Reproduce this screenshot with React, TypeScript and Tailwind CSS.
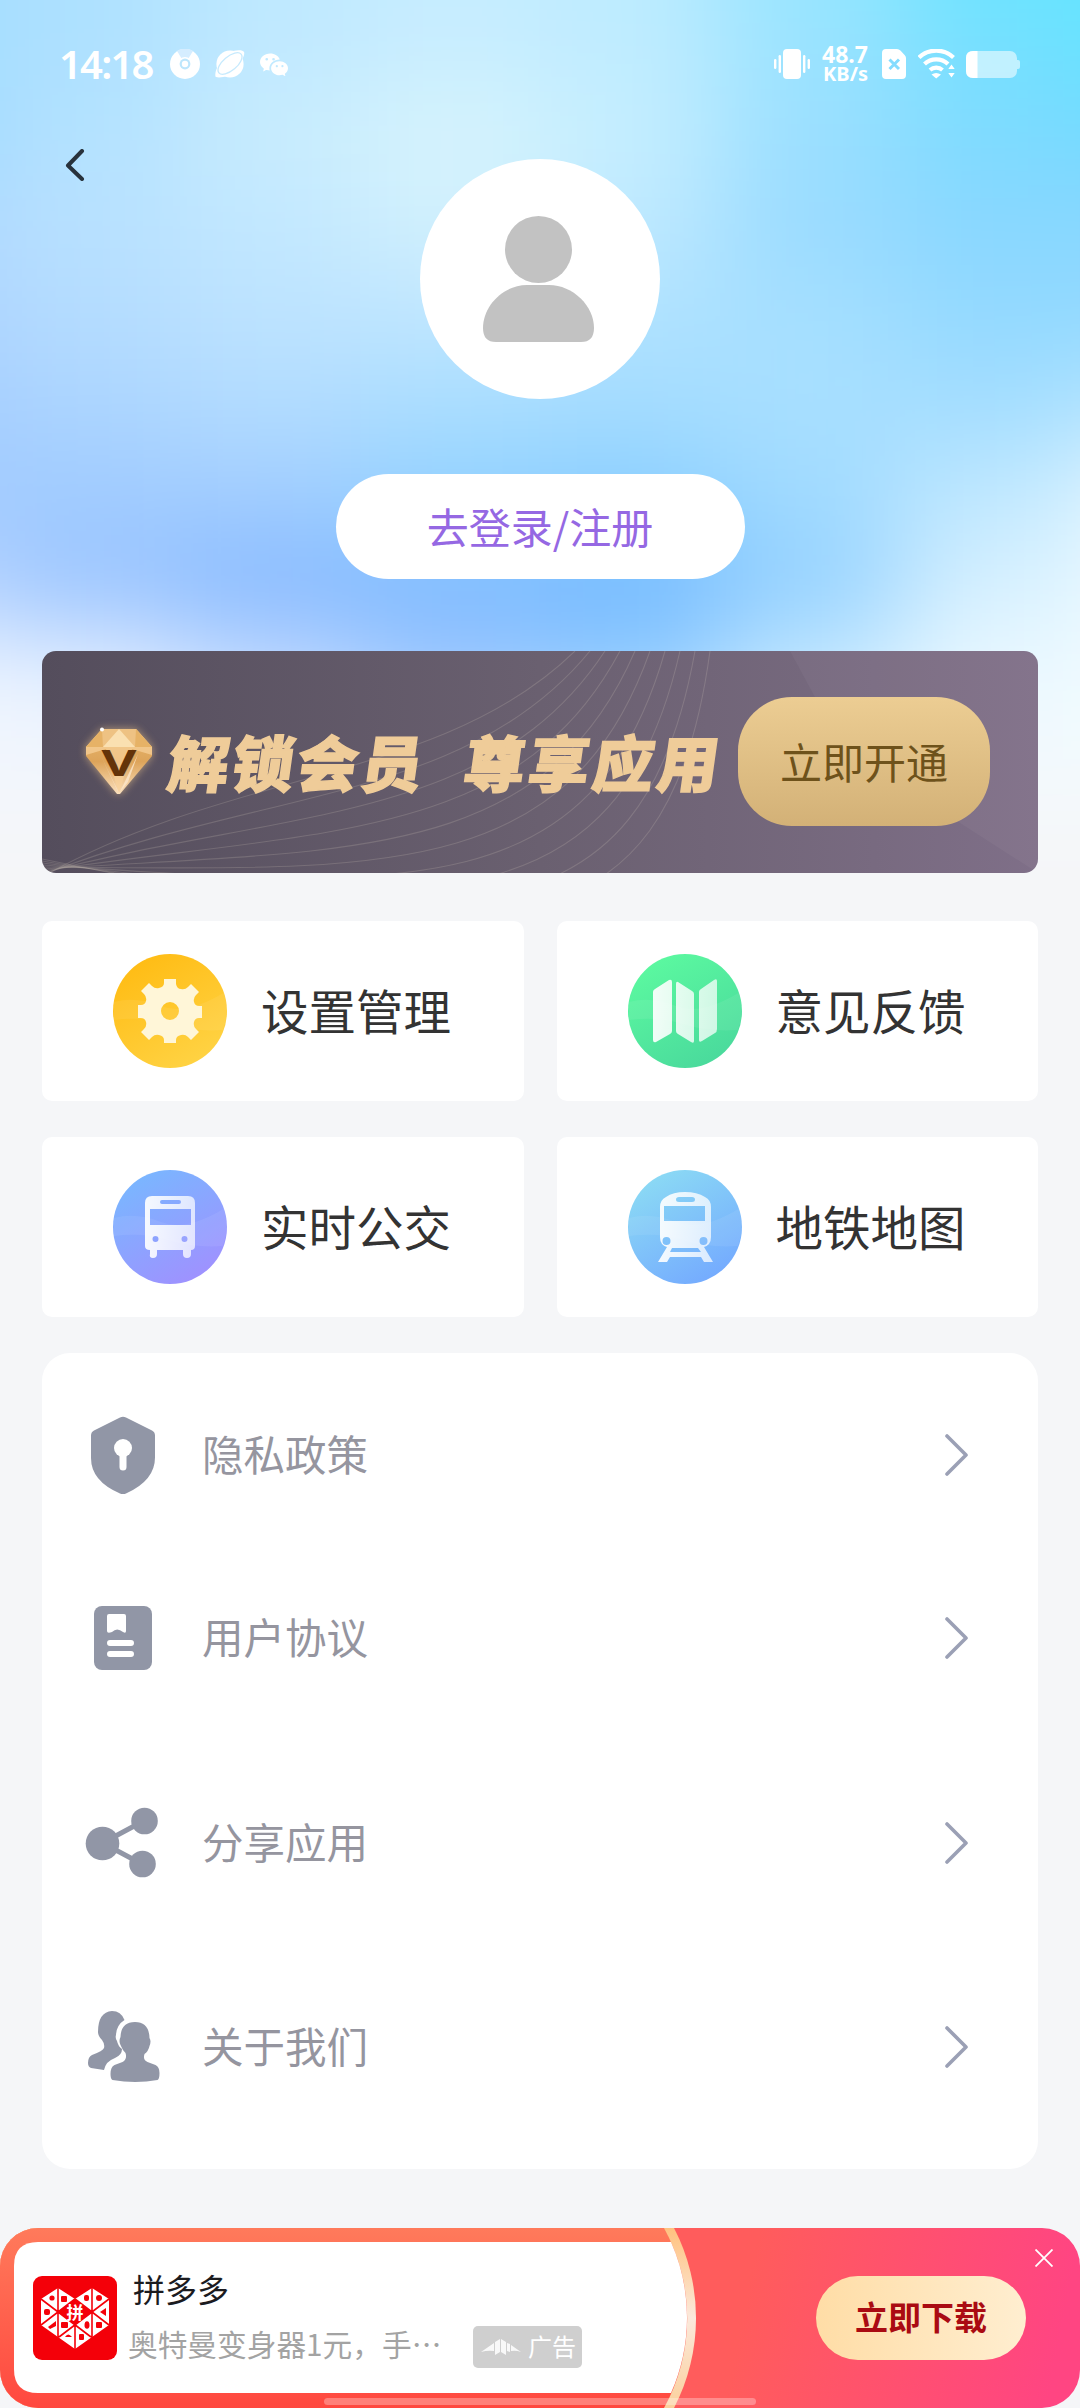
import type { ReactNode } from 'react';
import { BsWechat } from 'react-icons/bs';

// Colour samples for the soft sky behind the header, one row every 90px
const skyRows = [
  ['#a2dcff', '#aee1ff', '#bde8ff', '#c6ecff', '#bcebff', '#96e6ff', '#6be5ff', '#5ce6ff'],
  ['#a2dcff', '#aee1ff', '#c0e9ff', '#c8edff', '#bfecff', '#9be3ff', '#76e0ff', '#60e4ff'],
  ['#a0d9ff', '#b4e2ff', '#c8ecfe', '#d7f4fc', '#c5eeff', '#9bdfff', '#7edbff', '#70d8ff'],
  ['#aed6ff', '#b8e1ff', '#c2e8ff', '#d1f0fd', '#bfe9ff', '#9adbff', '#89d7ff', '#86d6ff'],
  ['#acd2ff', '#b4dcff', '#bde3ff', '#bfe6ff', '#b0e2ff', '#a5dfff', '#93d9ff', '#90d8ff'],
  ['#a4ccff', '#acd5ff', '#b2dcff', '#aaddff', '#a4dcff', '#a8dfff', '#a3ddff', '#b8e5ff'],
  ['#a2cbff', '#a0cbff', '#a2cdff', '#93d2ff', '#8dd0ff', '#a0daff', '#c0e8ff', '#eaf8ff'],
  ['#bcd6ff', '#9cc5ff', '#88baff', '#80baff', '#74b9ff', '#96d2ff', '#d6f0ff', '#f0fbff'],
  ['#eff6ff', '#e6f0ff', '#c2daff', '#9ac6ff', '#92cdff', '#c4e8ff', '#eaf8ff', '#f2fcff'],
  ['#f3f7fd', '#f2f6fd', '#f0f5fc', '#e8f2fc', '#e8f4fc', '#f0f8fd', '#f3fafd', '#f4fafd'],
  ['#f5f6f8', '#f5f6f8', '#f5f6f8', '#f5f6f8', '#f5f6f8', '#f5f6f8', '#f5f6f8', '#f5f6f8'],
  ['#f5f6f8', '#f5f6f8', '#f5f6f8', '#f5f6f8', '#f5f6f8', '#f5f6f8', '#f5f6f8', '#f5f6f8'],
];

function Sky() {
  return (
    <svg className="absolute left-0 top-0 h-[870px] w-[1080px]" viewBox="0 0 1080 870">
      <defs>
        <filter id="soft" filterUnits="userSpaceOnUse" x="-300" y="-200" width="1680" height="1300" colorInterpolationFilters="sRGB">
          <feGaussianBlur stdDeviation="56 46" />
        </filter>
      </defs>
      <g filter="url(#soft)">
        {skyRows.map((row, r) =>
          row.map((color, c) => (
            <rect
              key={`${r}-${c}`}
              x={c === 0 ? -300 : (c - 1) * 180}
              y={r === 0 ? -200 : (r - 1) * 90}
              width={c === 0 || c === 7 ? 301 : 181}
              height={r === 0 || r === 11 ? 201 : 91}
              fill={color}
            />
          ))
        )}
      </g>
    </svg>
  );
}

function StatusBar() {
  return (
    <div className="flex h-32 items-center justify-between pl-[59px] pr-[60px] text-white">
      <div className="flex items-center">
        <span className="w-24 whitespace-nowrap font-['Noto_Sans'] text-[40px] font-semibold leading-none tracking-[-1.8px]">14:18</span>
        <svg className="ml-[15px] size-[30px]" viewBox="0 0 30 30">
          <circle cx="15" cy="15" r="15" fill="white" />
          <path d="M15 15 7 2a15 15 0 0 1 16 0z" fill="#d5edff" />
          <circle cx="15" cy="15" r="7" fill="white" />
          <circle cx="15" cy="15" r="5.400" fill="#bde6fc" />
          <circle cx="15" cy="15" r="3.200" fill="white" />
        </svg>
        <svg className="ml-[15px] size-[30px]" viewBox="0 0 30 30">
          <circle cx="15" cy="15" r="13.600" fill="white" />
          <path d="M2 19C0 23 0 28 1 28c3 1 8 0 11-1M18 2c5-1 10-1 11 1s-1 6-3 10" fill="white" />
          <ellipse cx="15" cy="14.500" rx="14.500" ry="7" transform="rotate(-40 15 14.500)" fill="none" stroke="#c6eafd" strokeWidth="1.300" />
        </svg>
        <BsWechat className="ml-[15px] size-[28px]" />
      </div>
      <div className="flex items-center">
        <svg className="h-[30px] w-9" viewBox="0 0 36 30" fill="white">
          <rect x="9" width="18" height="30" rx="4" />
          <rect x="4.600" y="6" width="2.400" height="18" rx="1.200" />
          <rect x="29" y="6" width="2.400" height="18" rx="1.200" />
          <rect y="10" width="2.400" height="10" rx="1.200" />
          <rect x="33.600" y="10" width="2.400" height="10" rx="1.200" />
        </svg>
        <div className="ml-3 flex w-[46px] flex-col items-end font-['Noto_Sans'] font-bold leading-5">
          <span className="text-[23px]">48.7</span>
          <span className="text-[20px]">KB/s</span>
        </div>
        <svg className="ml-[14px] h-[30px] w-6" viewBox="0 0 24 30">
          <path d="M4 0h11q2 0 3.400 1.500l4.200 4.400Q24 7.300 24 9v17q0 4-4 4H4q-4 0-4-4V4q0-4 4-4z" fill="white" />
          <path d="m7.500 10.500 9.500 9.500m0-9.500-9.500 9.500" stroke="#85dcff" strokeWidth="3" />
        </svg>
        <svg className="ml-3 h-[30px] w-[37px]" viewBox="0 0 37 30" fill="none" stroke="white" strokeWidth="4.200">
          <path d="M1 8.500a25 25 0 0 1 34.500 0" />
          <path d="M6.500 15a17 17 0 0 1 23.500 0" />
          <path d="M12 21a9.500 9.500 0 0 1 12.500 0" />
          <path d="M18.200 29.500 13.500 25.500q4.500-3.200 9.500 0zM33.500 15.500l3.200 4.500h-6.400zM33.500 28.500l3.200-4.500h-6.400z" fill="white" stroke="none" />
        </svg>
        <svg className="ml-[11px] h-[27px] w-[54px]" viewBox="0 0 54 27" fill="white">
          <rect width="51" height="27" rx="7" opacity=".55" />
          <path d="M51 9h1q2 0 2 2v5q0 2-2 2h-1z" opacity=".55" />
          <path d="M11.500 0H7Q0 0 0 7v13q0 7 7 7h4.500z" />
        </svg>
      </div>
    </div>
  );
}

function Diamond() {
  return (
    <svg className="h-[86px] w-[88px]" viewBox="0 0 88 86">
      <defs>
        <linearGradient id="gem" x1="0" y1="0" x2="0" y2="1">
          <stop offset="0" stopColor="#e9b96f" />
          <stop offset=".5" stopColor="#dda45a" />
          <stop offset="1" stopColor="#fbe0bd" />
        </linearGradient>
        <filter id="gemGlow" x="-30%" y="-30%" width="160%" height="160%">
          <feGaussianBlur stdDeviation="4" />
        </filter>
      </defs>
      <path d="M27 10h34l16 18v9L45 75h-3L11 37v-9z" fill="#f4c98a" opacity=".6" filter="url(#gemGlow)" />
      <path d="M27 10h34l16 18v9L45 75h-3L11 37v-9z" fill="url(#gem)" />
      <path d="M11 28h66L61 10H27z" fill="#eec283" />
      <path d="M28 28 44 10l16 18z" fill="#fae0b1" />
      <path d="M27 10 11 28h17zM61 10l16 18H60z" fill="#e6b266" />
      <path d="M11 28h66v8L57 30 44 75 31 30 11 36z" fill="#f8d29b" opacity=".7" />
      <path d="M25 35 44 75l19-40-10 28-9 11z" fill="#fde7cc" opacity=".8" />
      <text x="44" y="57" textAnchor="middle" textLength="35" lengthAdjust="spacingAndGlyphs" className="font-['Noto_Sans']" fontSize="35" fontWeight="700" fill="#643409">V</text>
      <circle cx="27" cy="10.500" r="2" fill="white" />
    </svg>
  );
}

function VipBanner() {
  return (
    <div className="relative mx-[42px] mt-[72px] flex h-[222px] items-center overflow-hidden rounded-[14px] bg-gradient-to-r from-[#544d5c] via-[#6a6070] to-[#7f6f88]">
      <svg className="absolute inset-0 h-full w-full" viewBox="0 0 996 222" fill="none">
        <path d="M748 0h248v222L800 96z" fill="white" opacity=".04" />
        {[0, 1, 2, 3, 4, 5, 6, 7, 8, 9].map(i => (
          <path
            key={i}
            d={`M0 ${226 - i * 2}C${190 + i * 28} ${118 + i * 20} ${400 + i * 25} ${130 + i * 21} ${533 + i * 15} 0`}
            stroke="#d8cbbd"
            strokeWidth="1.100"
            opacity=".2"
          />
        ))}
      </svg>
      <div className="relative flex items-center pl-[33px]">
        <Diamond />
        <div className="-mt-1 ml-[6px] flex w-[560px] -skew-x-[8deg] gap-[38px] whitespace-nowrap text-[61px] font-black leading-none tracking-[3.500px] text-[#efcc99] [-webkit-text-stroke:1.500px_#efcc99]">
          <span>解锁会员</span>
          <span>尊享应用</span>
        </div>
      </div>
      <button className="absolute left-[696px] top-[46px] h-[129px] w-[252px] rounded-[54px] bg-gradient-to-b from-[#eccd93] to-[#d3b177] pb-[2px] text-[42px] text-[#6e521b]">
        立即开通
      </button>
    </div>
  );
}

function RoundIcon({ id, from, to, children }: { id: string; from: string; to: string; children: ReactNode }) {
  return (
    <svg className="size-[114px]" viewBox="0 0 114 114">
      <defs>
        <linearGradient id={id} x1=".2" y1="0" x2=".8" y2="1">
          <stop offset="0" stopColor={from} />
          <stop offset="1" stopColor={to} />
        </linearGradient>
        <linearGradient id={`${id}-glyph`} x1="0" y1="0" x2="1" y2="0">
          <stop offset="0" stopColor="white" stopOpacity=".92" />
          <stop offset="1" stopColor="white" stopOpacity=".72" />
        </linearGradient>
      </defs>
      <circle cx="57" cy="57" r="57" fill={`url(#${id})`} />
      <path d="M1 48q22-6 47 4t64-14q5 18-2 38-30 2-55-6T1 66z" fill="white" opacity=".07" />
      <g fill={`url(#${id}-glyph)`}>{children}</g>
    </svg>
  );
}

const services = [
  {
    title: '设置管理',
    icon: (
      <RoundIcon id="settings" from="#ffbb12" to="#ffd446">
        <path
          fillRule="evenodd"
          fill="#fff6d8"
          d="M51 25h12v5q1 5 5 5 4 1 7-2l3-3 8 8-3 3q-3 3-2 7t5 4h3v12h-3q-4 0-5 4t2 7l3 3-8 8-3-3q-3-3-7-2-5 1-5 5v3H51v-3q0-4-5-5-4-1-7 2l-3 3-8-8 3-3q3-3 2-7t-5-4h-3V51h3q4 0 5-4t-2-7l-3-3 8-8 3 3q3 3 7 2 5-1 5-5zM57 48a9 9 0 1 0 0 18a9 9 0 1 0 0-18z"
        />
      </RoundIcon>
    ),
  },
  {
    title: '意见反馈',
    icon: (
      <RoundIcon id="feedback" from="#5cfaa0" to="#49d89c">
        <path d="M27 35q-2 1-2 3v48q0 3 3 2l14-8q2-1 2-3V28q0-3-3-2zM50 28q-2-1-2 2v47q0 2 2 3l13 8q3 2 3-1V40q0-2-2-3zM86 26q3-2 3 1v48q0 3-2 4l-13 8q-3 2-3-1V38q0-2 2-3z" />
      </RoundIcon>
    ),
  },
  {
    title: '实时公交',
    icon: (
      <RoundIcon id="bus" from="#78b8ff" to="#a18fff">
        <path
          fillRule="evenodd"
          d="M39 26h36q7 0 7 7v43q0 4-4 4v4q0 4-4 4t-4-4v-4H44v4q0 4-4 4t-3-4v-4q-5 0-5-4V33q0-7 7-7zm10 4q-2 0-2 2t2 2h17q2 0 2-2t-2-2zM37 39v16h41V39zM42.500 66a3 3 0 1 0 0 6a3 3 0 1 0 0-6zM71.500 66a3 3 0 1 0 0 6a3 3 0 1 0 0-6z"
        />
      </RoundIcon>
    ),
  },
  {
    title: '地铁地图',
    icon: (
      <RoundIcon id="metro" from="#8cdcf4" to="#73a8ff">
        <path
          fillRule="evenodd"
          d="M57 22q12 0 20 5 6 3 6 10v30q0 8-7 10l9 15h-9l-3-5H42l-3 5h-9l9-15q-7-2-7-10V37q0-7 6-10 7-5 19-5zm-6 5q-3 0-3 2.500T51 32h13q3 0 3-2.500T64 27zM36 36v15h41V36zM38.500 67a4 4 0 1 0 0 8a4 4 0 1 0 0-8zM75.500 67a4 4 0 1 0 0 8a4 4 0 1 0 0-8zM44 78l-2 4h31l-3-4z"
        />
      </RoundIcon>
    ),
  },
];

const menuItems = [
  {
    title: '隐私政策',
    margin: 'mt-[60px]',
    icon: (
      <svg className="size-[78px]" viewBox="0 0 78 78">
        <path d="M36 1.500q3-1.500 6 0l26 13q3 1.500 3 5v22q0 23-29 36-3 1.500-6 0Q7 65 7 42V19.500q0-3.500 3-5z" fill="#9196a6" />
        <circle cx="39" cy="32" r="9" fill="white" />
        <path d="M39 34v17" stroke="white" strokeWidth="7" strokeLinecap="round" />
      </svg>
    ),
  },
  {
    title: '用户协议',
    margin: 'mt-[99px]',
    icon: (
      <svg className="size-[78px]" viewBox="0 0 78 78">
        <rect x="10" y="7" width="58" height="64" rx="8" fill="#9196a6" />
        <path d="M25 15h15q2 0 2 2v15q0 3-3 1-6-5-11 0-5 2-5-1V17q0-2 2-2z" fill="white" />
        <path d="M26 44h21M26 55h21" stroke="white" strokeWidth="6" strokeLinecap="round" />
      </svg>
    ),
  },
  {
    title: '分享应用',
    margin: 'mt-[121px]',
    icon: (
      <svg className="size-[78px]" viewBox="0 0 78 78" fill="#9196a6">
        <path d="M60.500 16.500 18.500 39 58 60" fill="none" stroke="#9196a6" strokeWidth="5" />
        <circle cx="18.500" cy="39.500" r="16.800" />
        <circle cx="60.500" cy="17" r="13.300" />
        <circle cx="58.500" cy="60" r="13.300" />
      </svg>
    ),
  },
  {
    title: '关于我们',
    margin: 'mt-[120px]',
    icon: (
      <svg className="size-[78px]" viewBox="0 0 78 78" fill="#9196a6">
        <path d="M28 3q9 0 12.500 9-8 5-8.500 15-1 3 1 6 1 5 5 8 0 6-7 9-9 3-11 12L7 60q-3-1-3-5 0-6 4-8 11-4 12-7 1-4-2-8-4-4-4-8Q14 4 28 3z" />
        <path d="M51 14q14 0 14.500 16 2 3 0 8-1 5-5 8-2 6 3 8l8 3q4 2 4 8 0 6-2 7-22 4-45 0-2-1-2-6 0-7 4-9l8-3q5-3 3-9-3-3-5-8-2-4 0-8Q37 14 51 14z" />
      </svg>
    ),
  },
];

// Heart shaped store logo, split into small triangular tiles
function StoreLogo() {
  return (
    <svg className="size-[84px] rounded-[9px] bg-[#f40009]" viewBox="0 0 84 84">
      <path d="M8 23 25 12l17 11 17-11 17 11v26L42 73 8 49z" fill="white" />
      <path d="m42 23-17 13 17 13 17-13z" fill="#f40009" />
      <path d="M25 10v52M59 10v52M42 49v25M8 23l50 38M76 23 26 61M8 49l34-26M76 49 42 23M42 10v12" stroke="#f40009" strokeWidth="1.600" />
      <g fill="#f40009">
        <circle cx="19" cy="22" r="2.600" />
        <rect x="28" y="20" width="6" height="6" rx="1" />
        <rect x="51" y="19" width="5" height="6" rx="2" />
        <circle cx="66" cy="22" r="3" />
        <rect x="11" y="33" width="6" height="6" rx="2" />
        <path d="m67 36 6-4v8z" />
        <path d="m15 51 8-6v5l-6 3z" />
        <rect x="28" y="46" width="7" height="6" rx="1" />
        <ellipse cx="54" cy="49" rx="2.500" ry="3.800" />
        <rect x="63" y="46" width="6" height="6" rx="1" />
        <path d="M32 61q3-5 7 0z" />
        <rect x="46" y="58" width="5" height="6" rx="1" />
      </g>
      <path d="m42 24-15 12 15 12 15-12z" fill="#f40009" />
      <text x="42" y="42.500" textAnchor="middle" fontSize="17" fontWeight="700" fill="white">拼</text>
    </svg>
  );
}

function AdBanner() {
  return (
    <div className="relative mt-auto h-[180px] overflow-hidden rounded-[38px]">
      <svg className="absolute inset-0 h-full w-full" viewBox="0 0 1080 180">
        <defs>
          <linearGradient id="adLeft" x1="0" y1="0" x2="0" y2="1">
            <stop offset="0" stopColor="#ff7a5b" />
            <stop offset="1" stopColor="#ff483f" />
          </linearGradient>
          <linearGradient id="adRight" gradientUnits="userSpaceOnUse" x1="760" y1="0" x2="1070" y2="60">
            <stop offset="0" stopColor="#ff5c5c" />
            <stop offset="1" stopColor="#ff4582" />
          </linearGradient>
          <linearGradient id="adRing" x1="0" y1="0" x2="0" y2="1">
            <stop offset="0" stopColor="#ffc27f" />
            <stop offset=".5" stopColor="#fbe9dc" />
            <stop offset="1" stopColor="#fbd09c" />
          </linearGradient>
        </defs>
        <rect width="1080" height="180" fill="url(#adRight)" />
        <path d="M0 0h674a195 195 0 0 1 0 180H0z" fill="url(#adRing)" />
        <path d="M0 0h664a186 186 0 0 1 0 180H0z" fill="url(#adLeft)" />
        <path d="M38 14h633a186 186 0 0 1 0 151H38q-24 0-24-24V38q0-24 24-24z" fill="white" />
      </svg>
      <div className="relative flex h-full items-center pl-[33px]">
        <StoreLogo />
        <div className="-mt-1 ml-[11px] flex w-[345px] flex-col">
          <span className="pl-[5px] text-[32px] leading-[44px] text-[#1b1b1f]">拼多多</span>
          <span className="mt-[12px] whitespace-nowrap text-[29.700px] leading-[44px] text-[#a3a3a3]">奥特曼变身器1元，手⋯</span>
        </div>
        <div className="mt-[58px] flex h-[42px] w-[109px] items-center rounded-[5px] bg-[#cfcfcf] pl-2 text-white">
          <svg className="h-4 w-[40px]" viewBox="0 0 40 16" fill="white">
            <path d="M0 13 13 4v8q-6-1-13 1zM14 3l5-3v13l-5 3zM20 0l5 3v13l-5-3zM26 4l3 1v8l-3-1zM30 6l10 7q-5-2-10-1z" opacity=".85" />
          </svg>
          <span className="ml-[7px] pb-[2px] text-[24px] leading-none">广告</span>
        </div>
        <button className="ml-[234px] h-[84px] w-[210px] rounded-full bg-gradient-to-r from-[#ffdda6] to-[#ffeed0] pb-[2px] text-[33px] font-bold text-[#aa0b12]">
          立即下载
        </button>
      </div>
      <svg className="absolute right-[27px] top-[21px] size-[18px]" viewBox="0 0 18 18">
        <path d="m.5.5 17 17m0-17-17 17" stroke="white" strokeWidth="1.800" />
      </svg>
      <div className="absolute left-[324px] top-[170px] h-[7px] w-[432px] rounded-full bg-white/30" />
    </div>
  );
}

export default function App() {
  return (
    <div className="relative flex h-[2408px] w-[1080px] flex-col overflow-hidden bg-[#f5f6f8] font-['Noto_Sans_CJK_SC',sans-serif]">
      <Sky />
      <div className="relative flex flex-1 flex-col">
        <StatusBar />

        <div className="grid grid-cols-[420px_240px_420px] pt-[21px]">
          <svg className="ml-[65px] h-8 w-5" viewBox="0 0 20 32" fill="none">
            <path d="M17 2 3 16.500 17 30" stroke="#28323c" strokeWidth="4" strokeLinecap="round" strokeLinejoin="round" />
          </svg>
          <div className="mt-[10px] size-[240px] rounded-full bg-white">
            <svg viewBox="0 0 240 240" fill="#c2c2c2">
              <circle cx="118.500" cy="90.500" r="33.500" />
              <path d="M107 126h22c24 0 45 21 45 43q0 14-13 14H76q-13 0-13-14c0-22 20-43 44-43z" />
            </svg>
          </div>
        </div>

        <button className="mx-auto mt-[75px] h-[105px] w-[409px] rounded-full bg-white pb-[2px] text-[42px] text-[#9568e3]">
          去登录/注册
        </button>

        <VipBanner />

        <div className="mx-[42px] mt-12 grid grid-cols-2 gap-x-[33px] gap-y-9">
          {services.map(service => (
            <div key={service.title} className="flex h-[180px] items-center rounded-[10px] bg-white pl-[71px]">
              {service.icon}
              <span className="ml-[34px] pb-[3px] text-[47.500px] leading-none text-[#333]">{service.title}</span>
            </div>
          ))}
        </div>

        <div className="mx-[42px] mt-9 h-[816px] rounded-[28px] bg-white">
          {menuItems.map(item => (
            <div key={item.title} className={`flex h-[84px] items-center pl-[42px] pr-[68px] ${item.margin}`}>
              {item.icon}
              <span className="ml-10 pb-[3px] text-[41.500px] leading-none text-[#95959f]">{item.title}</span>
              <svg className="ml-auto h-[42px] w-[26px]" viewBox="0 0 26 42" fill="none">
                <path d="m3 2 19 19L3 40" stroke="#9ba0b5" strokeWidth="3.600" strokeLinecap="round" strokeLinejoin="round" />
              </svg>
            </div>
          ))}
        </div>

        <AdBanner />
      </div>
    </div>
  );
}
